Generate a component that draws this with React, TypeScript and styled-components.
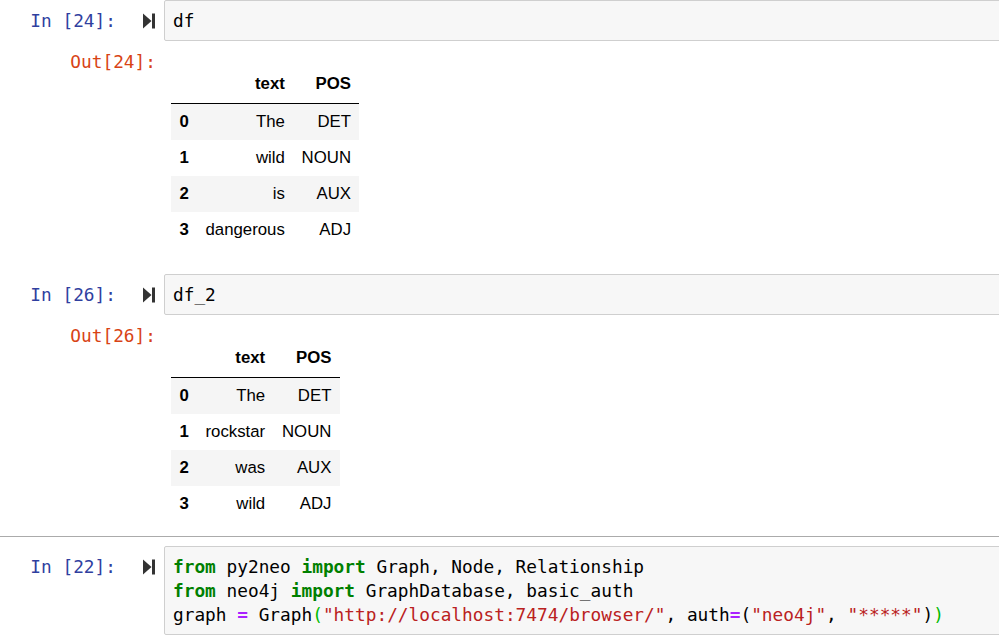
import styled, { createGlobalStyle } from 'styled-components';

const GlobalStyle = createGlobalStyle`
  html, body {
    margin: 0;
    padding: 0;
    background: #fff;
    overflow: hidden;
  }
`;

type Row = { idx: number; text: string; pos: string };

const firstFrame: Row[] = [
  { idx: 0, text: 'The', pos: 'DET' },
  { idx: 1, text: 'wild', pos: 'NOUN' },
  { idx: 2, text: 'is', pos: 'AUX' },
  { idx: 3, text: 'dangerous', pos: 'ADJ' },
];

const secondFrame: Row[] = [
  { idx: 0, text: 'The', pos: 'DET' },
  { idx: 1, text: 'rockstar', pos: 'NOUN' },
  { idx: 2, text: 'was', pos: 'AUX' },
  { idx: 3, text: 'wild', pos: 'ADJ' },
];

function RunIcon() {
  return (
    <svg width="12" height="16" viewBox="0 0 12 16">
      <path d="M0 0.5 L8.5 8 L0 15.5 Z" fill="#333" />
      <rect x="9" y="0.5" width="3" height="15" fill="#333" />
    </svg>
  );
}

function DataFrame({ rows }: { rows: Row[] }) {
  return (
    <Table>
      <thead>
        <tr>
          <Th />
          <Th>text</Th>
          <Th>POS</Th>
        </tr>
      </thead>
      <tbody>
        {rows.map((r) => (
          <Tr key={r.idx}>
            <IndexCell>{r.idx}</IndexCell>
            <Td>{r.text}</Td>
            <Td>{r.pos}</Td>
          </Tr>
        ))}
      </tbody>
    </Table>
  );
}

function DfCell({ count, code, rows, first }: { count: number; code: string; rows: Row[]; first?: boolean }) {
  return (
    <Cell $top={first ? 0 : 26}>
      <InputRow>
        <InPrompt>In [{count}]:</InPrompt>
        <RunButton>
          <RunIcon />
        </RunButton>
        <InputBox>
          <Code>{code}</Code>
        </InputBox>
      </InputRow>
      <OutputRow>
        <OutPrompt>Out[{count}]:</OutPrompt>
        <OutputBody>
          <DataFrame rows={rows} />
        </OutputBody>
      </OutputRow>
    </Cell>
  );
}

export default function App() {
  return (
    <>
      <GlobalStyle />
      <Notebook>
        <DfCell count={24} code="df" rows={firstFrame} first />
        <DfCell count={26} code="df_2" rows={secondFrame} />
        <SelectedCell>
          <InputRow>
            <InPrompt>In [22]:</InPrompt>
            <RunButton>
              <RunIcon />
            </RunButton>
            <InputBox>
              <Code>
                <Kw>from</Kw> py2neo <Kw>import</Kw> Graph, Node, Relationship
                {'\n'}
                <Kw>from</Kw> neo4j <Kw>import</Kw> GraphDatabase, basic_auth
                {'\n'}
                graph <Op>=</Op> Graph<Bracket>(</Bracket>
                <Str>"http://localhost:7474/browser/"</Str>, auth<Op>=</Op>(<Str>"neo4j"</Str>,{' '}
                <Str>"*****"</Str>)<Bracket>)</Bracket>
              </Code>
            </InputBox>
          </InputRow>
        </SelectedCell>
      </Notebook>
    </>
  );
}

const Notebook = styled.div`
  display: flex;
  flex-direction: column;
  width: 999px;
  font-family: 'DejaVu Sans Mono', 'Liberation Mono', monospace;
`;

const Cell = styled.div<{ $top: number }>`
  display: flex;
  flex-direction: column;
  margin-top: ${(p) => p.$top}px;
`;

const SelectedCell = styled.div`
  margin-top: 14px;
  padding-top: 9px;
  border-top: 1px solid #ababab;
`;

const InputRow = styled.div`
  display: flex;
  align-items: flex-start;
`;

const InPrompt = styled.div`
  width: 116px;
  flex: none;
  padding-top: 9px;
  text-align: right;
  font-size: 17.8px;
  line-height: 24px;
  color: #303f9f;
  white-space: pre;
`;

const RunButton = styled.div`
  width: 48px;
  flex: none;
  display: flex;
  padding: 13px 0 0 27px;
  box-sizing: border-box;
`;

const InputBox = styled.div`
  flex: 1;
  margin-right: -4px;
  padding: 8px 8px 7px;
  background: #f7f7f7;
  border: 1px solid #cfcfcf;
  border-radius: 2px;
`;

const Code = styled.pre`
  margin: 0;
  font-family: 'DejaVu Sans Mono', 'Liberation Mono', monospace;
  font-size: 17.8px;
  line-height: 24px;
  color: #000;
`;

const Kw = styled.span`
  color: #008000;
  font-weight: bold;
`;

const Op = styled.span`
  color: #aa22ff;
  font-weight: bold;
`;

const Str = styled.span`
  color: #ba2121;
`;

const Bracket = styled.span`
  color: #00bb00;
`;

const OutputRow = styled.div`
  display: flex;
  align-items: flex-start;
  margin-top: 9px;
`;

const OutPrompt = styled.div`
  width: 164px;
  flex: none;
  box-sizing: border-box;
  padding-right: 8px;
  text-align: right;
  font-size: 17.8px;
  line-height: 24px;
  color: #d84315;
  white-space: pre;
`;

const OutputBody = styled.div`
  padding: 16px 0 0 7px;
`;

const Table = styled.table`
  border-collapse: collapse;
  border: none;
  font-family: 'Liberation Sans', Arial, sans-serif;
  font-size: 16.8px;
  color: #000;
`;

const Th = styled.th`
  padding: 8px 8.4px 9px;
  line-height: 20px;
  text-align: right;
  font-weight: bold;
  border-bottom: 1px solid #000;
`;

const Tr = styled.tr`
  &:nth-child(odd) {
    background: #f5f5f5;
  }
`;

const Td = styled.td`
  padding: 8px 8.4px;
  line-height: 20px;
  text-align: right;
  white-space: nowrap;
`;

const IndexCell = styled(Td)`
  font-weight: bold;
`;
